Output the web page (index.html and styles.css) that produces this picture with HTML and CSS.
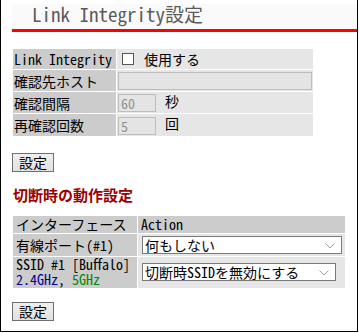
FILE: index.html
```html
<!DOCTYPE html>
<html lang="ja">
<head>
<meta charset="UTF-8">
<title>Link Integrity設定</title>
<link rel="stylesheet" href="styles.css">
</head>
<body>

<div class="frame">
    <div class="page-title">
        <h1>Link Integrity設定</h1>
    </div>

    <div class="content">
        <table class="form-table">
            <tr>
                <th>Link Integrity</th>
                <td class="check-cell"><label><input type="checkbox"> 使用する</label></td>
            </tr>
            <tr>
                <th>確認先ホスト</th>
                <td><input type="text" class="host-input" disabled></td>
            </tr>
            <tr>
                <th>確認間隔</th>
                <td><input type="text" class="num-input" value="60" disabled> 秒</td>
            </tr>
            <tr>
                <th>再確認回数</th>
                <td><input type="text" class="num-input" value="5" disabled> 回</td>
            </tr>
        </table>

        <button class="btn">設定</button>

        <h2 class="section-title">切断時の動作設定</h2>

        <table class="action-table">
            <tr class="head-row">
                <th>インターフェース</th>
                <th>Action</th>
            </tr>
            <tr class="port-row">
                <th>有線ポート(#1)</th>
                <td>
                    <div class="select-wrap wide">
                        <select>
                            <option>何もしない</option>
                        </select>
                        <svg class="chevron" width="10" height="6" viewBox="0 0 10 6"><path d="M0.5 0.5 L5 5 L9.5 0.5" fill="none" stroke="#a0a0a0" stroke-width="1"/></svg>
                    </div>
                </td>
            </tr>
            <tr class="ssid-row">
                <th>SSID #1 [Buffalo]<br><span class="band24">2.4GHz</span>, <span class="band5">5GHz</span></th>
                <td>
                    <div class="select-wrap">
                        <select>
                            <option>切断時SSIDを無効にする</option>
                        </select>
                        <svg class="chevron" width="10" height="6" viewBox="0 0 10 6"><path d="M0.5 0.5 L5 5 L9.5 0.5" fill="none" stroke="#a0a0a0" stroke-width="1"/></svg>
                    </div>
                </td>
            </tr>
        </table>

        <button class="btn btn-last">設定</button>
    </div>
</div>

</body>
</html>
```

FILE: styles.css
```css
body {
    margin: 0;
    padding: 0;
    font-family: "Noto Sans CJK JP", sans-serif;
    font-feature-settings: "hwid" 1; /* half-width latin, like MS Gothic */
    font-size: 14px;
    color: #000;
    background: #fff;
}

input, select, button {
    font-family: inherit;
    font-feature-settings: inherit;
}

.frame {
    width: 356px;
    height: 331px;
    border: 1px solid #000;
    border-top: none;
    overflow: hidden;
}

.page-title {
    margin: 4px 0 0 11px;
    background-color: #fafafa;
    border-bottom: 3px solid #ff0000;
    height: 25px;
}

.page-title h1 {
    margin: 0;
    padding-left: 20px;
    font-size: 19px;
    font-weight: normal;
    line-height: 20px;
    color: #5a5a5a;
}

.content {
    padding-left: 11px;
}

table {
    border-spacing: 1px;
    border-collapse: separate;
}

th, td {
    font-weight: normal;
    text-align: left;
    white-space: nowrap;
    line-height: 16px;
}

.form-table {
    width: 302px;
    margin-top: 16px;
}

.form-table th {
    width: 102px;
    background-color: #cccccc;
    padding: 1px 1px;
    height: 18px;
}

.form-table td {
    background-color: #e6e6e6;
    padding: 1px 1px;
}

.check-cell label {
    display: flex;
    align-items: center;
}

.check-cell input {
    width: 12px;
    height: 12px;
    margin: 0 10px 0 4px;
    appearance: none;
    border: 1px solid #555;
    background: #fff;
}

input[type="text"] {
    box-sizing: border-box;
    height: 18px;
    margin: 0;
    border: 1px solid #bdbdbd;
    background-color: #e4e4e4;
    color: #909090;
    font-size: 14px;
    padding: 0 2px;
    vertical-align: middle;
}

.host-input {
    width: 194px;
}

.num-input {
    width: 38px;
    margin-right: 2px !important;
}

.btn {
    display: block;
    width: 42px;
    height: 19px;
    padding: 0;
    margin-top: 16px;
    font-size: 14px;
    line-height: 15px;
    border: 1px solid #707070;
    background: linear-gradient(#f0f0f0, #e0e0e0);
    border-radius: 0;
    color: #000;
}

.btn-last {
    margin-top: 13px;
}

.section-title {
    margin: 14px 0 0 1px;
    font-size: 15px;
    font-weight: bold;
    color: #990000;
    line-height: 18px;
}

.action-table {
    width: 334px;
    margin-top: 11px;
}

.action-table th {
    width: 118px;
    background-color: #cccccc;
    padding: 0 3px;
}

.action-table td {
    background-color: #e6e6e6;
    padding: 2px 2px 2px 4px;
}

.action-table .head-row th {
    background-color: #cccccc;
    height: 17px;
    padding-top: 0;
    padding-bottom: 0;
}

.action-table .head-row th + th {
    width: auto;
}

.port-row th {
    height: 22px;
    padding-top: 0;
    padding-bottom: 0;
}

.port-row td {
    padding-top: 1px;
    padding-bottom: 1px;
}

.ssid-row th {
    line-height: 15px;
    padding-top: 0;
    padding-bottom: 1px;
}

.band24 {
    color: #000099;
}

.band5 {
    color: #008800;
}

.select-wrap {
    position: relative;
    width: 194px;
}

.select-wrap.wide {
    width: 200px;
}

.select-wrap select {
    display: block;
    appearance: none;
    width: 100%;
    height: 18px;
    box-sizing: border-box;
    border: 1px solid #7a7a7a;
    background: #fff;
    padding: 0 2px;
    font-size: 14px;
    line-height: 16px;
    color: #000;
    border-radius: 0;
}

.chevron {
    position: absolute;
    right: 7px;
    top: 7px;
}
```
